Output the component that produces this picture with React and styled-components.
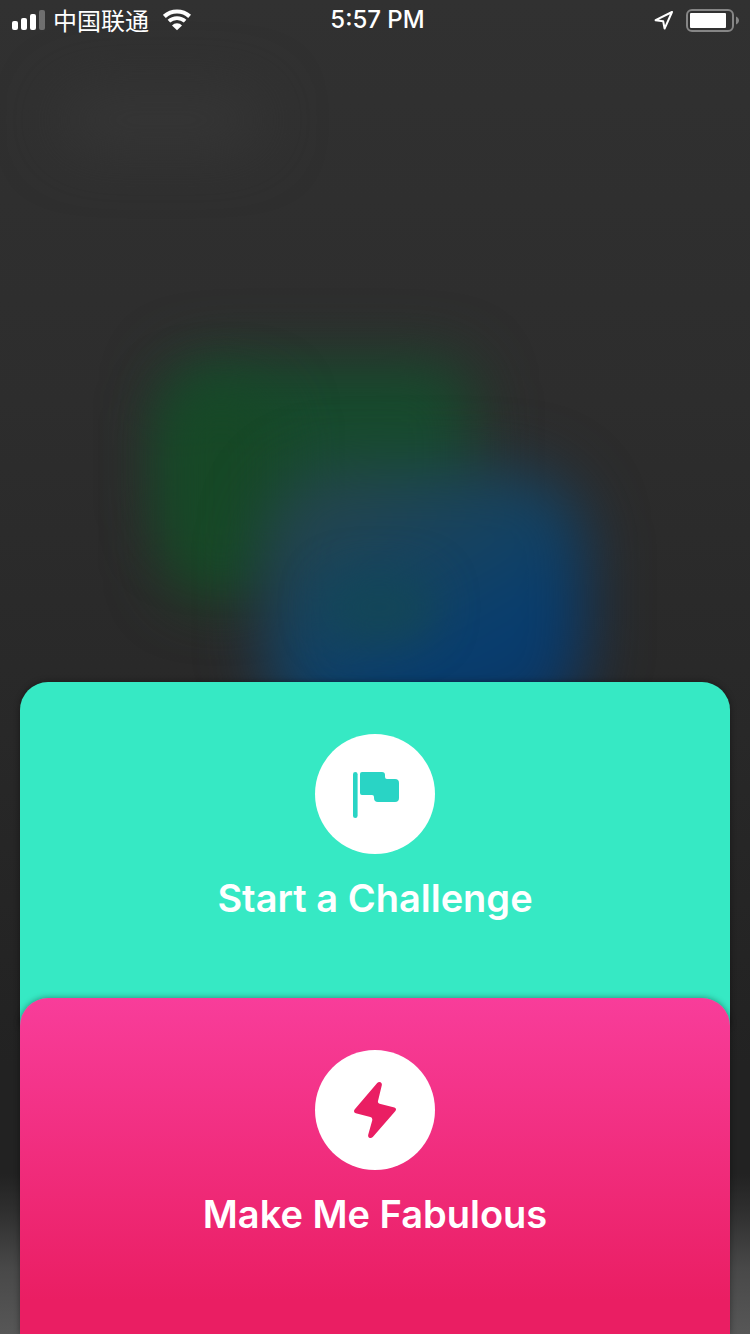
import React from 'react';
import styled, { createGlobalStyle } from 'styled-components';

const GlobalStyle = createGlobalStyle`
  * {
    box-sizing: border-box;
  }

  body {
    margin: 0;
    background: #222222;
    font-family: Inter, 'Noto Sans CJK SC', sans-serif;
  }
`;

const Screen = styled.div`
  position: relative;
  display: flex;
  flex-direction: column;
  justify-content: space-between;
  min-height: 100vh;
  overflow: hidden;
  color: #ffffff;
  background: linear-gradient(
    180deg,
    #313131 0%,
    #2d2d2d 30%,
    #282828 55%,
    #222222 80%,
    #222222 88%,
    #303030 91%,
    #484848 95%,
    #575757 100%
  );
`;

const Backdrop = styled.div`
  position: absolute;
  inset: 0;
`;

const Glow = styled.div`
  position: absolute;
  top: ${(props) => props.$top};
  left: ${(props) => props.$left};
  width: ${(props) => props.$width};
  height: ${(props) => props.$height};
  border-radius: ${(props) => props.$radius || '40px'};
  background: ${(props) => props.$color};
  filter: blur(${(props) => props.$blur || '30px'});
`;

const StatusBar = styled.header`
  position: relative;
  display: grid;
  grid-template-columns: 1fr auto 1fr;
  align-items: center;
  height: 40px;
  padding: 0 11px 0 12px;
`;

const StatusGroup = styled.div`
  display: flex;
  align-items: center;
  justify-content: ${(props) => (props.$end ? 'flex-end' : 'flex-start')};
  gap: ${(props) => (props.$end ? '12px' : '0')};

  & svg {
    display: block;
    flex: none;
  }
`;

const Carrier = styled.span`
  margin: 0 14px 0 7px;
  font-family: 'Noto Sans CJK SC', sans-serif;
  font-size: 24px;
  font-weight: 400;
  line-height: 40px;
`;

const Time = styled.time`
  padding-left: 4px;
  font-size: 24px;
  font-weight: 500;
  line-height: 40px;
`;

const CardStack = styled.main`
  position: relative;
  display: flex;
  flex-direction: column;
  padding: 0 20px;
`;

const Card = styled.button`
  display: flex;
  flex-direction: column;
  align-items: center;
  gap: 20px;
  padding: 52px 20px 104px;
  border: 0;
  border-radius: 28px 28px 0 0;
  color: #ffffff;
  background: ${(props) => props.$background};
  box-shadow: 0 0 6px rgba(0, 0, 0, 0.4);
  font-family: inherit;
  cursor: pointer;

  & + & {
    margin-top: -28px;
  }

  &:last-child {
    padding-bottom: 96px;
  }
`;

const CardIcon = styled.span`
  display: flex;
  align-items: center;
  justify-content: center;
  width: 120px;
  height: 120px;
  border-radius: 50%;
  background: #ffffff;
`;

const CardTitle = styled.span`
  font-size: 38px;
  font-weight: 600;
  line-height: 48px;
`;

function SignalIcon() {
  return (
    <svg width="34" height="22" viewBox="0 0 34 22" fill="#ffffff" aria-hidden="true">
      <rect x="0" y="12" width="6" height="9" rx="2" />
      <rect x="9" y="9" width="6" height="12" rx="2" />
      <rect x="18" y="5" width="6" height="16" rx="2" />
      <rect x="27" y="1" width="6" height="20" rx="2" opacity="0.3" />
    </svg>
  );
}

function WifiIcon() {
  return (
    <svg width="30" height="22" viewBox="0 0 30 22" fill="none" aria-hidden="true">
      <path d="M1.4 7.4A18.6 18.6 0 0 1 26.6 7.4" stroke="#ffffff" strokeWidth="4.2" />
      <path d="M5.9 12.2A12 12 0 0 1 22.1 12.2" stroke="#ffffff" strokeWidth="3.8" />
      <path d="M14 21.2L9 16.4A7 7 0 0 1 19 16.4Z" fill="#ffffff" />
    </svg>
  );
}

function LocationIcon() {
  return (
    <svg width="20" height="20" viewBox="0 0 20 20" fill="none" aria-hidden="true">
      <path
        d="M18 2L1.6 10.2L9.2 11.2L10.6 18.6Z"
        stroke="#ffffff"
        strokeWidth="2"
        strokeLinejoin="round"
      />
    </svg>
  );
}

function BatteryIcon() {
  return (
    <svg width="53" height="24" viewBox="0 0 53 24" fill="none" aria-hidden="true">
      <rect x="1" y="2" width="46" height="21" rx="5" stroke="#868686" strokeWidth="2" />
      <rect x="4" y="5" width="36" height="15" rx="1" fill="#ffffff" />
      <path d="M50 8.5C52 9.5 53 11 53 12.5S52 15.5 50 16.5Z" fill="#868686" />
    </svg>
  );
}

function FlagIcon() {
  return (
    <svg width="48" height="48" viewBox="0 0 48 48" fill="#29d4c5" aria-hidden="true">
      <rect x="2" y="2" width="4.6" height="46" rx="2.3" />
      <path d="M11 2H31Q34 2 34 5V7Q34 9 36 9H44Q48 9 48 13V28Q48 32 44 32H27Q23 32 23 28V27Q23 25 21 25H11Q9 25 9 23V4Q9 2 11 2Z" />
    </svg>
  );
}

function BoltIcon() {
  return (
    <svg width="44" height="58" viewBox="0 0 44 58" fill="#ea1e63" aria-hidden="true">
      <path d="M24.2 2Q25.8 .5 27.6 1.3Q29.2 2.2 28.8 4.2L25 20Q24.5 22.2 26.6 22.8L41.4 26.4Q44.2 27.4 42.2 30.2L19.8 56Q18 57.7 16.2 56.7Q14.8 55.8 15.2 53.8L19.2 39.4Q19.8 36.8 17.3 36.1L2.8 32.3Q-.2 31.2 1.8 28.2Z" />
    </svg>
  );
}

const cards = [
  { title: 'Start a Challenge', icon: FlagIcon, background: '#36e9c4' },
  {
    title: 'Make Me Fabulous',
    icon: BoltIcon,
    background: 'linear-gradient(180deg, #f83d9a 0%, #ea1e63 90%)',
  },
];

function App() {
  return (
    <Screen>
      <GlobalStyle />
      <Backdrop>
        <Glow $top="7%" $left="8%" $width="27%" $height="4%" $color="#363636" />
        <Glow $top="27%" $left="22%" $width="41%" $height="14%" $color="#174a2d" />
        <Glow
          $top="29%"
          $left="22%"
          $width="15%"
          $height="16%"
          $color="#174826"
          $blur="28px"
        />
        <Glow
          $top="35%"
          $left="35%"
          $width="43%"
          $height="20%"
          $radius="80px"
          $color="linear-gradient(150deg, #25454c 15%, #17435f 40%, #073d70 68%, #0d3765 90%)"
        />
        <Glow $top="43%" $left="43%" $width="15%" $height="5%" $color="#134658" $blur="20px" />
      </Backdrop>

      <StatusBar>
        <StatusGroup>
          <SignalIcon />
          <Carrier>中国联通</Carrier>
          <WifiIcon />
        </StatusGroup>
        <Time>5:57 PM</Time>
        <StatusGroup $end>
          <LocationIcon />
          <BatteryIcon />
        </StatusGroup>
      </StatusBar>

      <CardStack>
        {cards.map(({ title, icon: Icon, background }) => (
          <Card key={title} type="button" $background={background}>
            <CardIcon>
              <Icon />
            </CardIcon>
            <CardTitle>{title}</CardTitle>
          </Card>
        ))}
      </CardStack>
    </Screen>
  );
}

export default App;
